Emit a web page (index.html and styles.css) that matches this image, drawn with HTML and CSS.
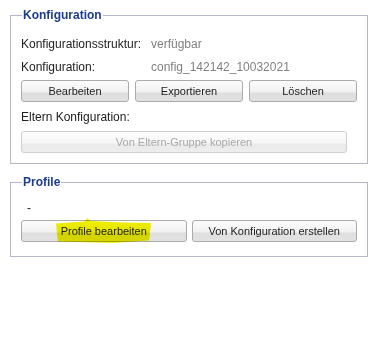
FILE: index.html
```html
<!DOCTYPE html>
<html>
<head>
    <title>Konfiguration</title>
    <meta name="viewport" content="width=device-width, initial-scale=1.0">
    <link rel="stylesheet" href="styles.css">
</head>
<body>
    <!-- Konfiguration -->
    <fieldset class="box">
        <legend>Konfiguration</legend>
        <div class="row">
            <span class="label">Konfigurationsstruktur:</span>
            <span class="value">verfügbar</span>
        </div>
        <div class="row">
            <span class="label">Konfiguration:</span>
            <span class="value">config_142142_10032021</span>
        </div>
        <div class="buttons three">
            <button>Bearbeiten</button>
            <button>Exportieren</button>
            <button>Löschen</button>
        </div>
        <div class="row">
            <span class="label">Eltern Konfiguration:</span>
        </div>
        <button class="wide" disabled>Von Eltern-Gruppe kopieren</button>
    </fieldset>

    <!-- Profile -->
    <fieldset class="box profile">
        <legend>Profile</legend>
        <div class="row dash">-</div>
        <div class="buttons two">
            <button class="marked"><span class="marker"></span><span class="txt">Profile bearbeiten</span></button>
            <button>Von Konfiguration erstellen</button>
        </div>
    </fieldset>
</body>
</html>
```

FILE: styles.css
```css
body {
    font-family: "Liberation Sans", Arial, sans-serif;
    font-size: 12px;
    color: #222;
    margin: 0;
    padding: 8px 7px 0 10px;
    background: #fff;
}
.box {
    margin: 0;
    padding: 10px 10px 10px 10px;
    border: 1px solid #b4b7c9;
    min-width: 0;
}
.box legend {
    font-weight: bold;
    font-size: 12px;
    line-height: 14px;
    color: #1d3c8f;
    padding: 0 1px;
    margin-left: 1px;
}
.profile {
    margin-top: 11px;
    padding-top: 7px;
    padding-bottom: 14px;
}
.row {
    display: flex;
    height: 23px;
    align-items: center;
}
.label {
    width: 130px;
}
.value {
    color: #808080;
}
.dash {
    padding-left: 6px;
    height: 24px;
}
.buttons {
    display: grid;
    gap: 6px;
    margin: 2px 0 3px;
}
.three { grid-template-columns: 1fr 1fr 1fr; }
.two {
    grid-template-columns: 1fr 1fr;
    gap: 5px;
    margin: 0;
}
button {
    font-family: "Liberation Sans", Arial, sans-serif;
    font-size: 11px;
    color: #222;
    height: 22px;
    padding: 0;
    border: 1px solid #ababab;
    border-radius: 3px;
    background: linear-gradient(#fcfcfc 0%, #f1f1f1 55%, #dedede 60%, #e2e2e2 100%);
    cursor: pointer;
}
button.wide {
    display: block;
    width: 326px;
    margin-top: 3px;
}
button:disabled {
    color: #a8a8a8;
    border-color: #d0d0d0;
    background: linear-gradient(#fdfdfd 0%, #f6f6f6 55%, #eaeaea 60%, #ededed 100%);
    cursor: default;
}
.marked {
    position: relative;
}
.marked .txt {
    position: relative;
}
.marker {
    position: absolute;
    left: 34px;
    top: -3px;
    width: 95px;
    height: 25px;
    background: #f2f200;
    mix-blend-mode: multiply;
    clip-path: polygon(0 22%, 30% 14%, 33% 0, 36% 12%, 70% 18%, 100% 20%, 98% 90%, 60% 100%, 2% 94%);
}
```
